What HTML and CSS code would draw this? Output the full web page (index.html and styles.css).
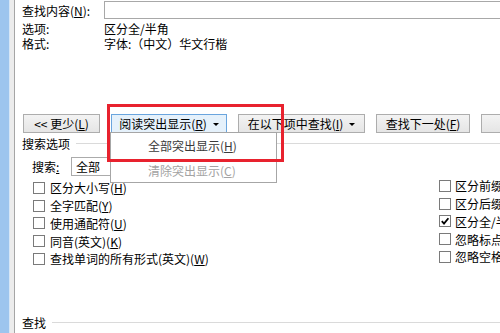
FILE: index.html
```html
<!DOCTYPE html>
<html>
<head>
<meta charset="utf-8">
<link rel="stylesheet" href="styles.css">
</head>
<body>
<div class="win">
  <div class="edge"><div class="blue"></div><div class="gap"></div><div class="gray"></div><div class="line"></div></div>
  <div class="main">
    <div class="find-row"><span class="lbl">查找内容(<u>N</u>):</span><div class="input"></div></div>
    <div class="info first"><span class="lbl">选项:</span><span>区分全/半角</span></div>
    <div class="info"><span class="lbl">格式:</span><span>字体:（中文）华文行楷</span></div>

    <div class="btns">
      <div class="btn b1">&lt;&lt; 更少(<u>L</u>)</div>
      <div class="btn b2 hot">阅读突出显示(<u>R</u>)<span class="arr"></span>
        <div class="menu">
          <div class="item">全部突出显示(<u>H</u>)</div>
          <div class="item dis">清除突出显示(<u>C</u>)</div>
        </div>
        <div class="redbox"></div>
      </div>
      <div class="btn b3">在以下项中查找(<u>I</u>)<span class="arr"></span></div>
      <div class="btn b4">查找下一处(<u>F</u>)</div>
      <div class="btn b5"></div>
    </div>

    <div class="sec">搜索选项</div>

    <div class="search"><span class="slbl">搜索<u>:</u></span><div class="select">全部</div></div>

    <div class="checks">
      <div class="col left">
        <div class="row"><span class="cb"></span><span>区分大小写(<u>H</u>)</span></div>
        <div class="row"><span class="cb"></span><span>全字匹配(<u>Y</u>)</span></div>
        <div class="row"><span class="cb"></span><span>使用通配符(<u>U</u>)</span></div>
        <div class="row"><span class="cb"></span><span>同音(英文)(<u>K</u>)</span></div>
        <div class="row"><span class="cb"></span><span>查找单词的所有形式(英文)(<u>W</u>)</span></div>
      </div>
      <div class="col right">
        <div class="row"><span class="cb"></span><span>区分前缀(<u>X</u>)</span></div>
        <div class="row"><span class="cb"></span><span>区分后缀(<u>T</u>)</span></div>
        <div class="row"><span class="cb"><svg viewBox="0 0 10 10" width="10" height="10"><path d="M1.8 5.2 L4 7.6 L8.4 2.2" fill="none" stroke="#000" stroke-width="1.8"/></svg></span><span>区分全/半角(<u>M</u>)</span></div>
        <div class="row"><span class="cb"></span><span>忽略标点符号(<u>S</u>)</span></div>
        <div class="row"><span class="cb"></span><span>忽略空格(<u>A</u>)</span></div>
      </div>
    </div>

    <div class="sec bottom">查找</div>
  </div>
</div>
</body>
</html>
```
FILE: styles.css
```css
html, body {
  margin: 0;
  padding: 0;
}
body {
  width: 500px;
  height: 333px;
  overflow: hidden;
  background: #fff;
  font: 12px/15px "Noto Sans CJK SC", "Liberation Sans", sans-serif;
  color: #000;
}
u { text-decoration: underline; text-underline-offset: 1px; }

.win {
  display: flex;
  height: 333px;
}
.edge { display: flex; flex: none; }
.blue { width: 9px; background: #9dc5ee; }
.gap { width: 1px; background: #d6e6f6; }
.gray { width: 4px; background: #ececec; }
.line { width: 1px; background: #a5a5a5; }

.main {
  flex: 1;
  min-width: 0;
  padding-left: 7px;
  display: flex;
  flex-direction: column;
}

.find-row {
  display: flex;
  align-items: center;
  margin-top: 1px;
  height: 18px;
}
.lbl { width: 82px; flex: none; }
.input {
  flex: 1;
  height: 18px;
  box-sizing: border-box;
  border: 1px solid #a8a8a8;
  border-right: none;
  background: #fff;
}
.info { display: flex; line-height: 15px; white-space: nowrap; }
.info.first { margin-top: 2px; }

.btns {
  display: flex;
  gap: 11px;
  margin-top: 63px;
  margin-left: 1px;
  position: relative;
  z-index: 2;
}
.btn {
  flex: none;
  height: 19px;
  box-sizing: border-box;
  border: 1px solid #adadad;
  background: linear-gradient(#f3f3f3, #e5e5e5);
  display: flex;
  align-items: center;
  justify-content: center;
  white-space: nowrap;
  position: relative;
  line-height: 17px;
}
.b1 { width: 77px; }
.b2 { width: 116px; }
.b3 { width: 127px; }
.b4 { width: 94px; }
.b5 { width: 40px; }
.hot {
  background: #e5f1fb;
  border-color: #6aa5de;
}
.arr {
  width: 0;
  height: 0;
  border-top: 3px solid #000;
  border-left: 3px solid transparent;
  border-right: 3px solid transparent;
  margin-left: 6px;
  margin-top: 1px;
}

.menu {
  position: absolute;
  left: -2px;
  top: 17px;
  width: 167px;
  height: 51px;
  box-sizing: border-box;
  border: 1px solid #a6a6a6;
  background: #fff;
  padding-top: 0;
  z-index: 1;
}
.item {
  height: 25px;
  line-height: 25px;
  padding-left: 37px;
  color: #3a3a3a;
}
.item.dis { color: #a3a3a3; }
.redbox {
  position: absolute;
  left: -5px;
  top: -11px;
  width: 177px;
  height: 58px;
  box-sizing: border-box;
  border: 3px solid #e8222e;
  z-index: 3;
}

.sec {
  display: flex;
  align-items: center;
  margin-top: 3px;
  height: 14px;
  white-space: nowrap;
}
.sec::after {
  content: "";
  flex: 1;
  height: 1px;
  background: #dadada;
  margin-left: 6px;
}
.sec.bottom {
  margin-top: 47px;
  height: 16px;
}

.search {
  display: flex;
  align-items: center;
  margin-top: 7px;
  height: 19px;
  padding-left: 10px;
}
.slbl { width: 39px; flex: none; }
.select {
  width: 130px;
  height: 19px;
  box-sizing: border-box;
  border: 1px solid #ababab;
  padding-left: 4px;
  line-height: 17px;
  background: #fff;
}

.checks {
  display: grid;
  grid-template-columns: 1fr 61px;
  margin-top: 3px;
}
.col { display: flex; flex-direction: column; }
.col.left { padding-left: 11px; }
.col.right { margin-top: -2px; overflow: hidden; }
.row {
  height: 17.75px;
  display: flex;
  align-items: center;
  gap: 5px;
  white-space: nowrap;
}
.col.right .row { gap: 4px; }
.cb {
  width: 12px;
  height: 12px;
  box-sizing: border-box;
  border: 1px solid #7a7a7a;
  background: #fff;
  flex: none;
  display: flex;
  align-items: center;
  justify-content: center;
}
.cb svg { display: block; }
```
